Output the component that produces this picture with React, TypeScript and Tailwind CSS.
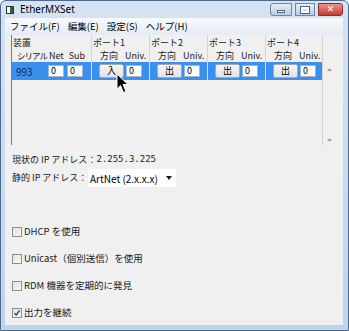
import React from "react";

const ports = [
  { name: "ポート1", dir: "入" },
  { name: "ポート2", dir: "出" },
  { name: "ポート3", dir: "出" },
  { name: "ポート4", dir: "出" },
];

const options = [
  { label: "DHCP を使用", checked: false },
  { label: "Unicast（個別送信）を使用", checked: false },
  { label: "RDM 機器を定期的に発見", checked: false },
  { label: "出力を継続", checked: true },
];

function CaptionButtons() {
  return (
    <div className="ml-auto flex self-start mt-[2px] gap-[3px]">
      <div className="w-[22px] h-[13px] rounded-l-[3px] border border-[#6f87a8] bg-gradient-to-b from-[#e6eef8] to-[#b9cbe3] flex items-center justify-center">
        <div className="w-[8px] h-[3px] mt-[4px] bg-white border border-[#4d6482]" />
      </div>
      <div className="w-[20px] h-[13px] border border-[#6f87a8] bg-gradient-to-b from-[#e6eef8] to-[#b9cbe3] flex items-center justify-center">
        <div className="w-[8px] h-[6px] border-[2px] border-white outline outline-1 outline-[#4d6482]" />
      </div>
      <div className="w-[25px] h-[13px] rounded-r-[3px] border border-[#8a2f25] bg-gradient-to-b from-[#e8928a] to-[#c4392c] flex items-center justify-center">
        <span className="text-white text-[9px] font-bold leading-none font-['DejaVu_Sans',sans-serif]">✕</span>
      </div>
    </div>
  );
}

function Checkbox({ checked }: { checked: boolean }) {
  return (
    <div className="w-[10px] h-[10px] border border-[#8f8f8f] bg-gradient-to-br from-[#e2e2e2] to-[#f7f7f7] flex items-center justify-center">
      {checked && (
        <svg width="8" height="8" viewBox="0 0 8 8">
          <path d="M1.5 4.2 L3.2 6 L6.6 1.5" fill="none" stroke="#2b3f6a" strokeWidth="1.3" />
        </svg>
      )}
    </div>
  );
}

function SmallInput() {
  return (
    <div className="w-[16px] h-[12px] bg-white border border-[#9db6d6] text-[9px] leading-[10px] pl-[2px] text-black">
      0
    </div>
  );
}

export default function App() {
  return (
    <div className="w-[349px] h-[331px] bg-white font-['Noto_Sans_CJK_JP','Noto_Sans',sans-serif] text-[9px] text-[#1a1a1a] relative">
      <div className="w-[349px] h-[331px] border border-[#4c6a8c] rounded-t-[6px] bg-gradient-to-b from-[#d5e3f4] to-[#bed3ec] flex flex-col pl-[4px] pr-[5px] pb-[5px]">
        {/* title bar */}
        <div className="h-[17px] flex items-center">
          <div className="ml-[1px] w-[8px] h-[8px] bg-[#3e5b4a] border border-[#2a3a30] flex">
            <div className="w-[3px] h-full bg-white" />
          </div>
          <span className="ml-[6px] text-[10px] text-black font-['Noto_Sans',sans-serif]">EtherMXSet</span>
          <CaptionButtons />
        </div>

        {/* client */}
        <div className="flex-1 bg-[#f0f0f0] flex flex-col">
          <div className="h-[17px] flex items-center gap-[8px] pl-[5px] bg-gradient-to-b from-[#f8fafd] to-[#e6ecf5] text-[9.5px] text-black">
            <span>ファイル(F)</span>
            <span>編集(E)</span>
            <span>設定(S)</span>
            <span>ヘルプ(H)</span>
          </div>

          {/* device grid */}
          <div className="ml-[6px] w-[325px] h-[110px] border-l border-[#7a7a7a] flex">
            <div className="w-[310px] flex flex-col">
              <div className="h-[14px] flex items-end">
                <div className="w-[79px] pl-[1px]">装置</div>
                {ports.map((p) => (
                  <div key={p.name} className="w-[58px] h-full border-l border-[#d4d4d4] pl-[1px] flex items-end last:w-[57px]">
                    {p.name}
                  </div>
                ))}
              </div>
              <div className="h-[13px] flex items-center">
                <div className="w-[79px] h-full flex items-center whitespace-nowrap">
                  <span className="ml-[5px] text-[8.5px] tracking-[-1px]">シリアル</span>
                  <span className="ml-[2px]">Net</span>
                  <span className="ml-[5px]">Sub</span>
                </div>
                {ports.map((p) => (
                  <div key={p.name} className="w-[58px] h-full border-l border-[#d4d4d4] flex items-center last:w-[57px]">
                    <span className="ml-[8px]">方向</span>
                    <span className="ml-[7px]">Univ.</span>
                  </div>
                ))}
              </div>
              <div className="h-[18px] bg-[#3a90ee] flex items-center">
                <div className="w-[79px] h-full flex items-center">
                  <span className="ml-[4px] w-[32px] text-[10px] text-[#0f2a63]">993</span>
                  <SmallInput />
                  <div className="w-[3px]" />
                  <SmallInput />
                </div>
                {ports.map((p) => (
                  <div key={p.name} className="w-[58px] h-full border-l border-[#cfe2fa] flex items-center last:w-[57px]">
                    <div className="ml-[7px] w-[25px] h-[14px] rounded-[2px] border border-[#a9a9a9] bg-gradient-to-b from-[#f5f5f5] to-[#e3e3e3] flex items-center justify-center text-[9px] text-black">
                      {p.dir}
                    </div>
                    <div className="w-[2px]" />
                    <SmallInput />
                  </div>
                ))}
              </div>
            </div>
            <div className="w-[14px] border-l border-[#d4d4d4] flex flex-col">
              <div className="h-[27px]" />
              <div className="flex-1 flex flex-col items-center justify-between pt-[6px] pb-[3px]">
                <svg width="5" height="3" viewBox="0 0 5 3">
                  <path d="M0 3 L2.5 0 L5 3 Z" fill="#a0a0a0" />
                </svg>
                <svg width="5" height="3" viewBox="0 0 5 3">
                  <path d="M0 0 L2.5 3 L5 0 Z" fill="#a0a0a0" />
                </svg>
              </div>
            </div>
          </div>

          {/* addresses */}
          <div className="ml-[7px] mt-[9px] h-[12px] flex items-center">
            現状の IP アドレス：<span className="font-['DejaVu_Sans_Mono',monospace] text-[9px]">2.255.3.225</span>
          </div>
          <div className="ml-[7px] mt-[3px] h-[18px] flex items-center">
            <span className="w-[76px]">静的 IP アドレス：</span>
            <div className="w-[88px] h-[18px] bg-white flex items-center justify-between pl-[2px] pr-[4px] text-[10px] text-black">
              <span>ArtNet (2.x.x.x)</span>
              <svg width="6" height="4" viewBox="0 0 6 4">
                <path d="M0 0 L6 0 L3 4 Z" fill="#1a1a1a" />
              </svg>
            </div>
          </div>

          {/* options */}
          <div className="ml-[7px] mt-[39px] flex flex-col gap-[16px]">
            {options.map((o) => (
              <div key={o.label} className="h-[11px] flex items-center gap-[2px]">
                <Checkbox checked={o.checked} />
                <span className="text-[9.5px] leading-none">{o.label}</span>
              </div>
            ))}
          </div>
        </div>
      </div>

      {/* mouse pointer */}
      <svg className="absolute left-[116px] top-[73px]" width="13" height="21" viewBox="0 0 13 21">
        <path d="M1 1 L1 16 L4.5 12.5 L7.5 19.5 L10 18.5 L7 11.5 L12 11.5 Z" fill="#000" stroke="#fff" strokeWidth="1" />
      </svg>
    </div>
  );
}
